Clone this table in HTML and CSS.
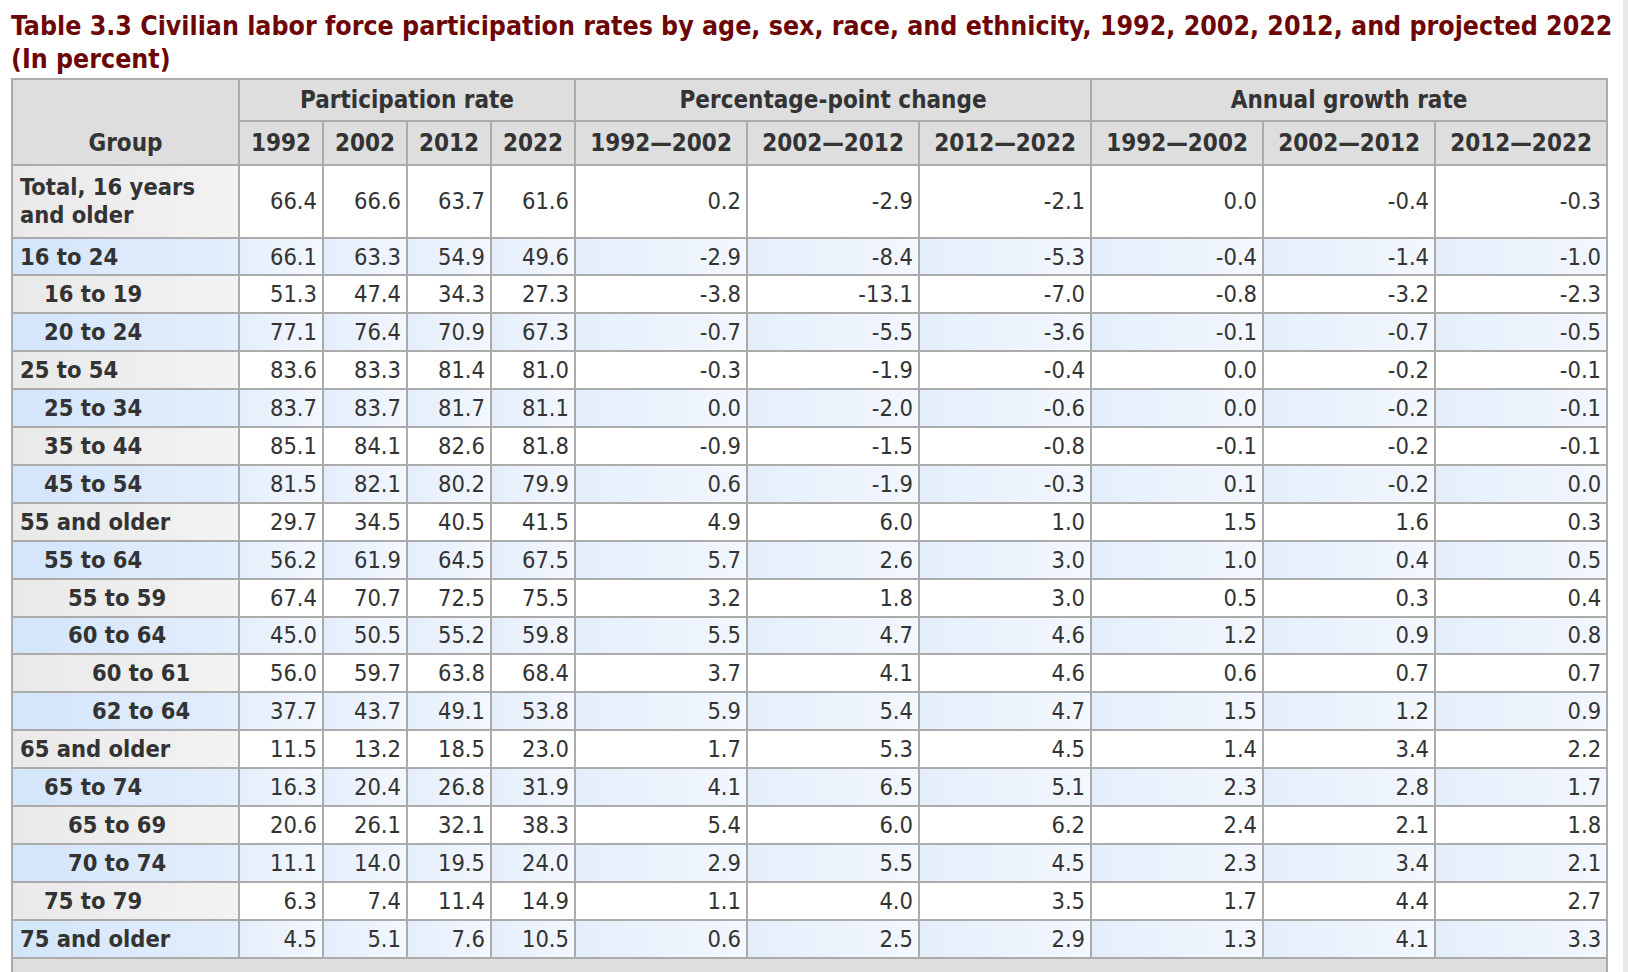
FILE: index.html
```html
<!DOCTYPE html>
<html lang="en">
<head>
<meta charset="utf-8">
<title>Table 3.3 Civilian labor force participation rates</title>
<link rel="stylesheet" href="styles.css">
</head>
<body>
<div class="page">
  <h1 class="title">Table 3.3 Civilian labor force participation rates by age, sex, race, and ethnicity, 1992, 2002, 2012, and projected 2022<br>(In percent)</h1>
  <table class="data">
    <colgroup>
      <col class="c-group">
      <col class="c-year"><col class="c-year"><col class="c-year"><col class="c-year">
      <col class="c-wide"><col class="c-wide"><col class="c-wide">
      <col class="c-wide"><col class="c-wide"><col class="c-wide">
    </colgroup>
    <thead>
      <tr class="h1">
        <th rowspan="2" class="h-group">Group</th>
        <th colspan="4">Participation rate</th>
        <th colspan="3">Percentage-point change</th>
        <th colspan="3">Annual growth rate</th>
      </tr>
      <tr class="h2">
        <th>1992</th><th>2002</th><th>2012</th><th>2022</th>
        <th>1992—2002</th><th>2002—2012</th><th>2012—2022</th>
        <th>1992—2002</th><th>2002—2012</th><th>2012—2022</th>
      </tr>
    </thead>
    <tbody>
      <tr class="odd total"><th class="lv0">Total, 16 years<br>and older</th><td>66.4</td><td>66.6</td><td>63.7</td><td>61.6</td><td>0.2</td><td>-2.9</td><td>-2.1</td><td>0.0</td><td>-0.4</td><td>-0.3</td></tr>
      <tr class="even"><th class="lv0">16 to 24</th><td>66.1</td><td>63.3</td><td>54.9</td><td>49.6</td><td>-2.9</td><td>-8.4</td><td>-5.3</td><td>-0.4</td><td>-1.4</td><td>-1.0</td></tr>
      <tr class="odd"><th class="lv1">16 to 19</th><td>51.3</td><td>47.4</td><td>34.3</td><td>27.3</td><td>-3.8</td><td>-13.1</td><td>-7.0</td><td>-0.8</td><td>-3.2</td><td>-2.3</td></tr>
      <tr class="even"><th class="lv1">20 to 24</th><td>77.1</td><td>76.4</td><td>70.9</td><td>67.3</td><td>-0.7</td><td>-5.5</td><td>-3.6</td><td>-0.1</td><td>-0.7</td><td>-0.5</td></tr>
      <tr class="odd"><th class="lv0">25 to 54</th><td>83.6</td><td>83.3</td><td>81.4</td><td>81.0</td><td>-0.3</td><td>-1.9</td><td>-0.4</td><td>0.0</td><td>-0.2</td><td>-0.1</td></tr>
      <tr class="even"><th class="lv1">25 to 34</th><td>83.7</td><td>83.7</td><td>81.7</td><td>81.1</td><td>0.0</td><td>-2.0</td><td>-0.6</td><td>0.0</td><td>-0.2</td><td>-0.1</td></tr>
      <tr class="odd"><th class="lv1">35 to 44</th><td>85.1</td><td>84.1</td><td>82.6</td><td>81.8</td><td>-0.9</td><td>-1.5</td><td>-0.8</td><td>-0.1</td><td>-0.2</td><td>-0.1</td></tr>
      <tr class="even"><th class="lv1">45 to 54</th><td>81.5</td><td>82.1</td><td>80.2</td><td>79.9</td><td>0.6</td><td>-1.9</td><td>-0.3</td><td>0.1</td><td>-0.2</td><td>0.0</td></tr>
      <tr class="odd"><th class="lv0">55 and older</th><td>29.7</td><td>34.5</td><td>40.5</td><td>41.5</td><td>4.9</td><td>6.0</td><td>1.0</td><td>1.5</td><td>1.6</td><td>0.3</td></tr>
      <tr class="even"><th class="lv1">55 to 64</th><td>56.2</td><td>61.9</td><td>64.5</td><td>67.5</td><td>5.7</td><td>2.6</td><td>3.0</td><td>1.0</td><td>0.4</td><td>0.5</td></tr>
      <tr class="odd"><th class="lv2">55 to 59</th><td>67.4</td><td>70.7</td><td>72.5</td><td>75.5</td><td>3.2</td><td>1.8</td><td>3.0</td><td>0.5</td><td>0.3</td><td>0.4</td></tr>
      <tr class="even"><th class="lv2">60 to 64</th><td>45.0</td><td>50.5</td><td>55.2</td><td>59.8</td><td>5.5</td><td>4.7</td><td>4.6</td><td>1.2</td><td>0.9</td><td>0.8</td></tr>
      <tr class="odd"><th class="lv3">60 to 61</th><td>56.0</td><td>59.7</td><td>63.8</td><td>68.4</td><td>3.7</td><td>4.1</td><td>4.6</td><td>0.6</td><td>0.7</td><td>0.7</td></tr>
      <tr class="even"><th class="lv3">62 to 64</th><td>37.7</td><td>43.7</td><td>49.1</td><td>53.8</td><td>5.9</td><td>5.4</td><td>4.7</td><td>1.5</td><td>1.2</td><td>0.9</td></tr>
      <tr class="odd"><th class="lv0">65 and older</th><td>11.5</td><td>13.2</td><td>18.5</td><td>23.0</td><td>1.7</td><td>5.3</td><td>4.5</td><td>1.4</td><td>3.4</td><td>2.2</td></tr>
      <tr class="even"><th class="lv1">65 to 74</th><td>16.3</td><td>20.4</td><td>26.8</td><td>31.9</td><td>4.1</td><td>6.5</td><td>5.1</td><td>2.3</td><td>2.8</td><td>1.7</td></tr>
      <tr class="odd"><th class="lv2">65 to 69</th><td>20.6</td><td>26.1</td><td>32.1</td><td>38.3</td><td>5.4</td><td>6.0</td><td>6.2</td><td>2.4</td><td>2.1</td><td>1.8</td></tr>
      <tr class="even"><th class="lv2">70 to 74</th><td>11.1</td><td>14.0</td><td>19.5</td><td>24.0</td><td>2.9</td><td>5.5</td><td>4.5</td><td>2.3</td><td>3.4</td><td>2.1</td></tr>
      <tr class="odd"><th class="lv1">75 to 79</th><td>6.3</td><td>7.4</td><td>11.4</td><td>14.9</td><td>1.1</td><td>4.0</td><td>3.5</td><td>1.7</td><td>4.4</td><td>2.7</td></tr>
      <tr class="even"><th class="lv0">75 and older</th><td>4.5</td><td>5.1</td><td>7.6</td><td>10.5</td><td>0.6</td><td>2.5</td><td>2.9</td><td>1.3</td><td>4.1</td><td>3.3</td></tr>
    </tbody>
    <tfoot>
      <tr class="foot"><td colspan="11"></td></tr>
    </tfoot>
  </table>
</div>
</body>
</html>
```

FILE: styles.css
```css
html, body {
  margin: 0;
  padding: 0;
  background: #ffffff;
}

body {
  font-family: "DejaVu Sans Condensed", "DejaVu Sans", sans-serif;
  font-stretch: condensed;
  color: #333333;
  overflow: hidden;
  height: 972px;
}

.page {
  height: 972px;
  border-right: 5px solid #e8e8e8;
  padding: 0 0 0 11px;
  box-sizing: border-box;
}

.title {
  margin: 0;
  padding: 9px 0 0 0;
  font-size: 26.5px;
  line-height: 33px;
  font-weight: bold;
  color: #6d0606;
  white-space: nowrap;
}

.data {
  border-collapse: collapse;
  table-layout: fixed;
  width: 1597px;
  font-size: 23.5px;
  margin-top: 3px;
}

.c-group { width: 227px; }
.c-year { width: 84px; }
.c-wide { width: 172px; }

.data th,
.data td {
  border: 2px solid #ababab;
  padding: 0;
  white-space: nowrap;
}

.data thead th {
  background: #dedede;
  color: #333333;
  font-weight: bold;
  font-size: 24px;
  line-height: 28px;
  text-align: center;
  vertical-align: middle;
}

.data thead th.h-group {
  vertical-align: bottom;
  padding-bottom: 7px;
}

.h1 { height: 42px; }
.h2 { height: 44px; }

.data tbody tr { height: 37.9px; }
.data tbody tr.total { height: 72.6px; }

.data tbody th {
  text-align: left;
  font-weight: bold;
  color: #333333;
  line-height: 28px;
  padding-left: 7px;
}

.data tbody td {
  text-align: right;
  padding-right: 5px;
  color: #333333;
}

.lv1 { padding-left: 31px !important; }
.lv2 { padding-left: 55px !important; }
.lv3 { padding-left: 79px !important; }

.odd th { background: linear-gradient(to right, #e9e9e9, #f3f3f3); }
.odd td { background: #ffffff; }
.even th { background: linear-gradient(to right, #d4e5fa, #e3eefc); }
.even td { background: linear-gradient(to right, #e4eefb, #f3f7fe); }

.foot { height: 20px; }
.foot td { background: #dedede; }
```
